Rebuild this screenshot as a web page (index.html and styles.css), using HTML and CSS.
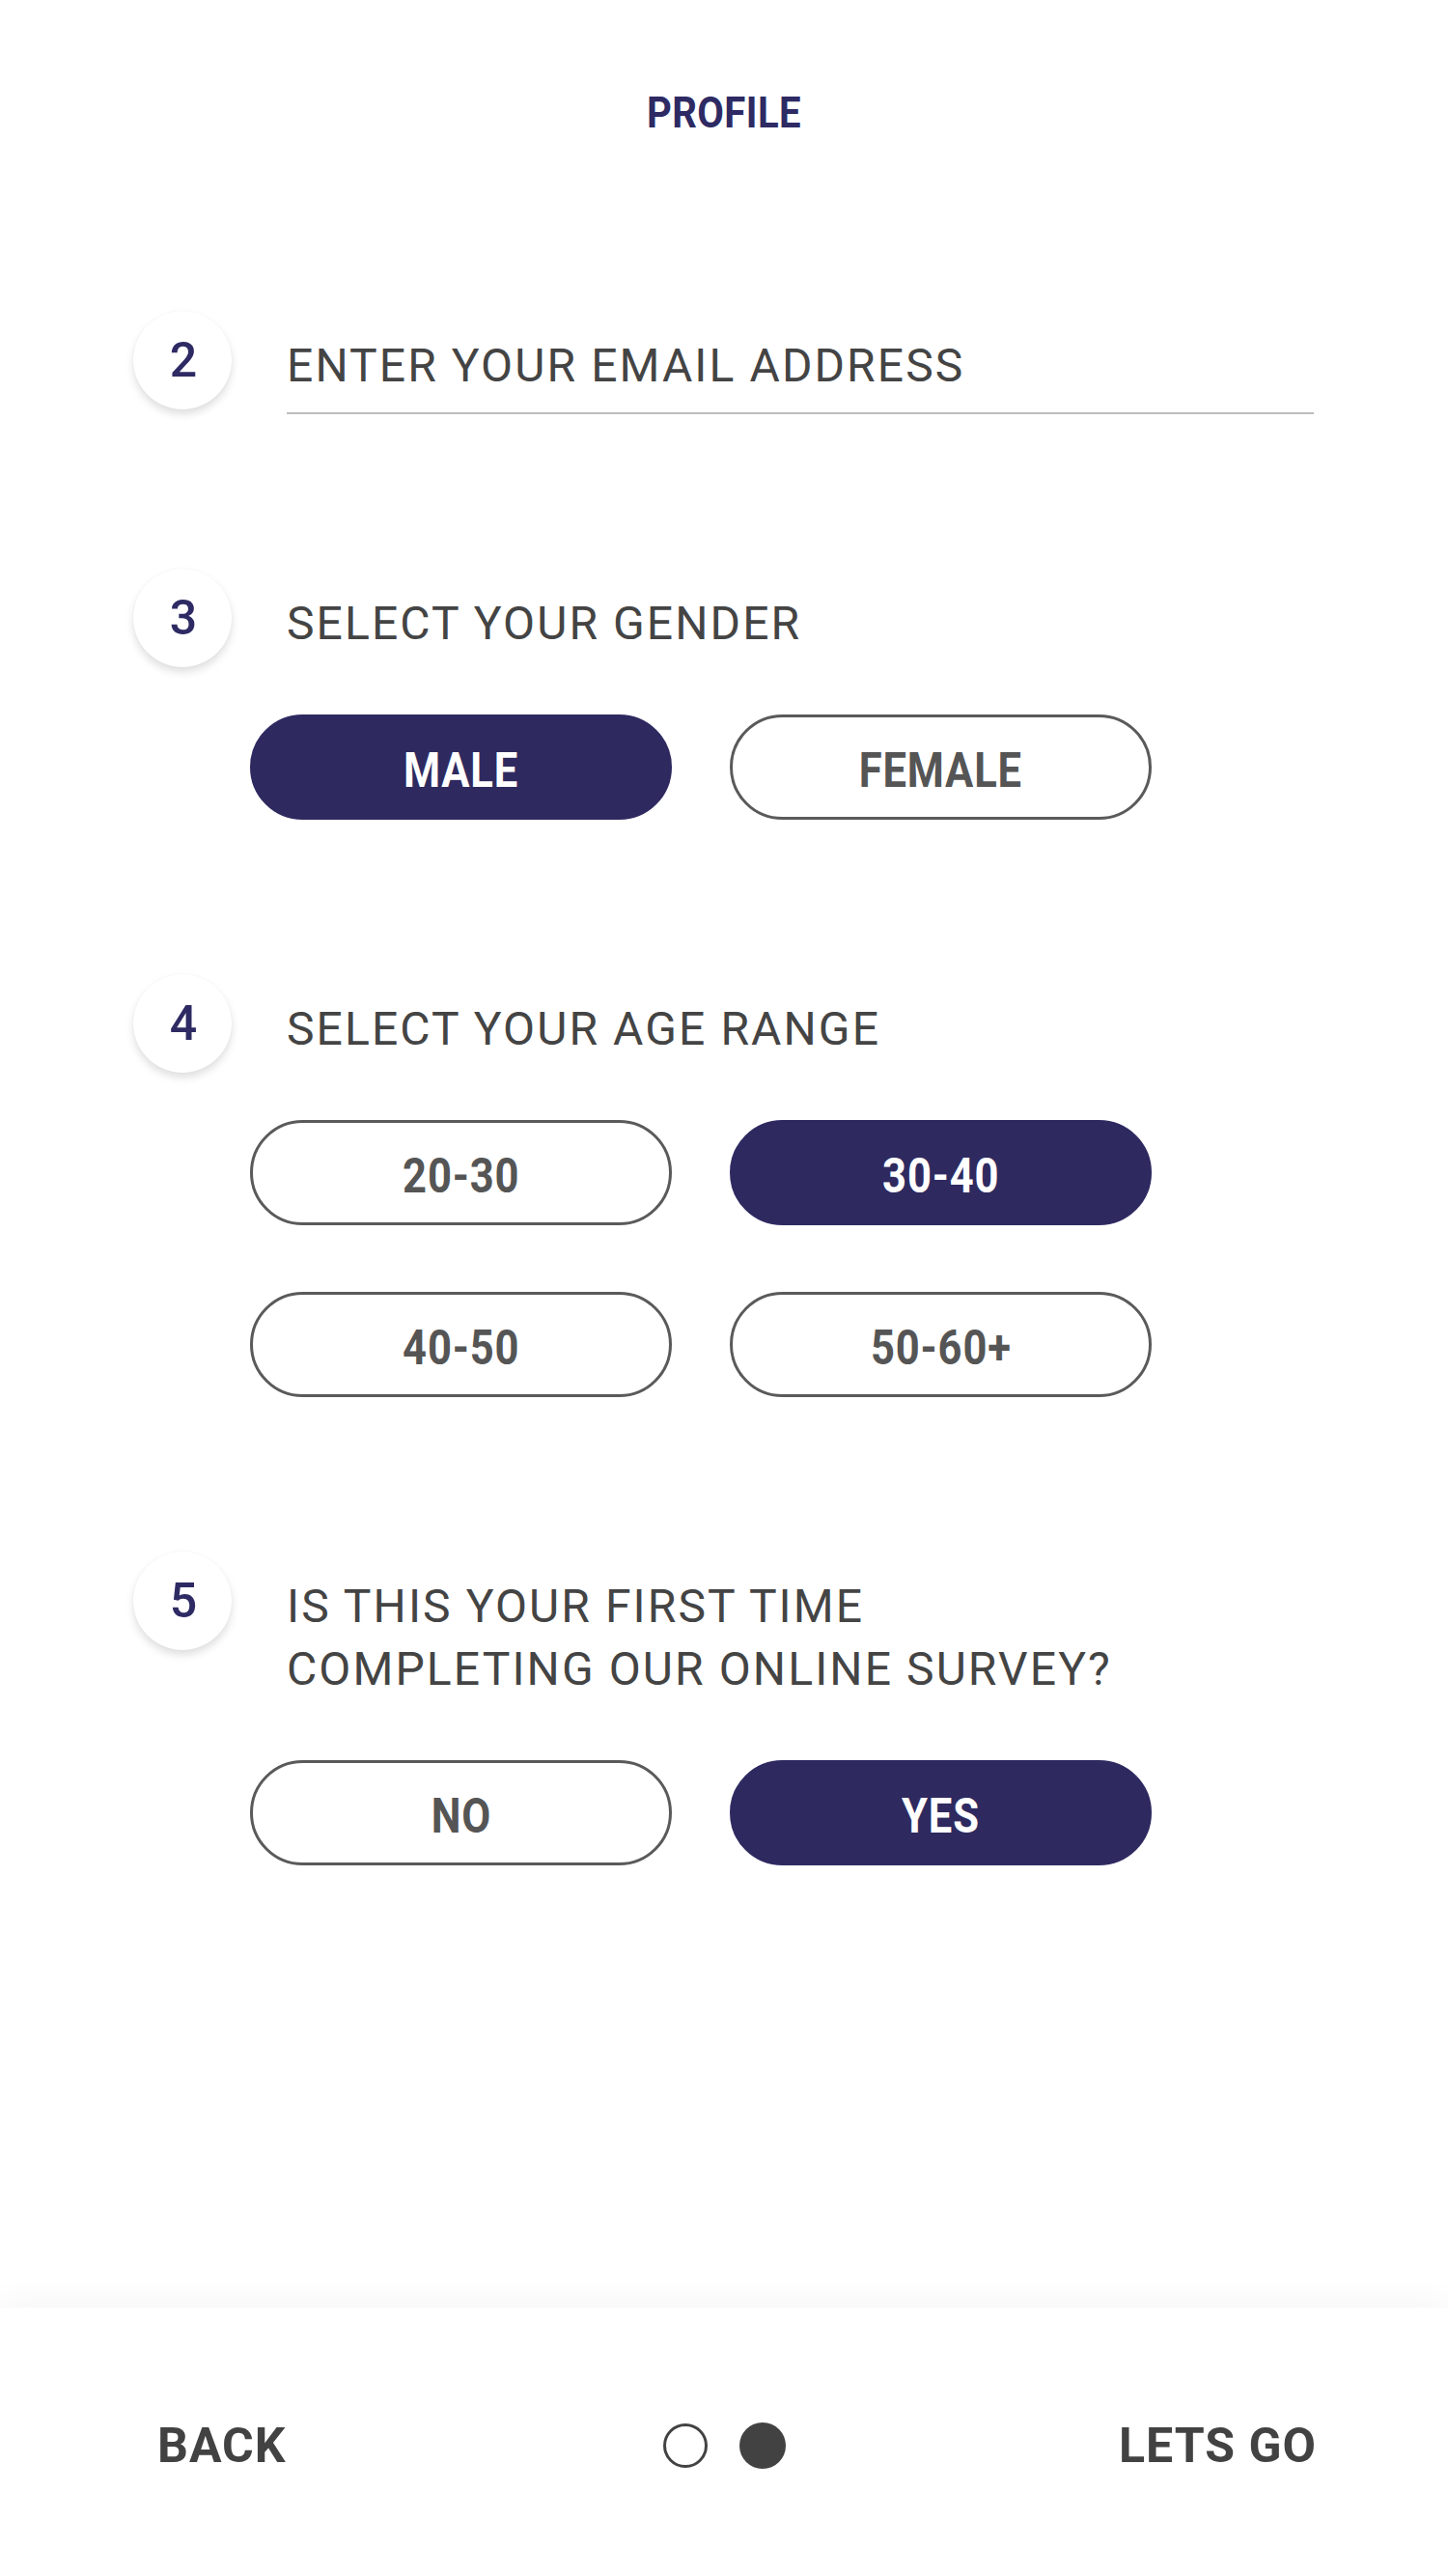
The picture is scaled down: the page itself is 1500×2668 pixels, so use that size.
FILE: index.html
```html
<!DOCTYPE html>
<html lang="en">
<head>
<meta charset="utf-8">
<title>Profile</title>
<link rel="stylesheet" href="styles.css">
</head>
<body>
<div class="screen">
  <main class="main">
    <header class="header"><h1 class="title"><span class="narrow">PROFILE</span></h1></header>
    <div class="steps">
      <section class="step">
        <div class="step-head">
          <span class="badge">2</span>
          <div class="field">ENTER YOUR EMAIL ADDRESS</div>
        </div>
      </section>
      <section class="step">
        <div class="step-head">
          <span class="badge">3</span>
          <div class="label">SELECT YOUR GENDER</div>
        </div>
        <div class="options">
          <button class="opt opt-on"><span class="narrow">MALE</span></button>
          <button class="opt"><span class="narrow">FEMALE</span></button>
        </div>
      </section>
      <section class="step">
        <div class="step-head">
          <span class="badge">4</span>
          <div class="label">SELECT YOUR AGE RANGE</div>
        </div>
        <div class="options">
          <button class="opt"><span class="narrow">20-30</span></button>
          <button class="opt opt-on"><span class="narrow">30-40</span></button>
          <button class="opt"><span class="narrow">40-50</span></button>
          <button class="opt"><span class="narrow">50-60+</span></button>
        </div>
      </section>
      <section class="step">
        <div class="step-head">
          <span class="badge">5</span>
          <div class="label">IS THIS YOUR FIRST TIME<br>COMPLETING OUR ONLINE SURVEY?</div>
        </div>
        <div class="options">
          <button class="opt"><span class="narrow">NO</span></button>
          <button class="opt opt-on"><span class="narrow">YES</span></button>
        </div>
      </section>
    </div>
  </main>
  <footer class="footer">
    <span class="nav nav-back">BACK</span>
    <div class="dots"><span class="dot"></span><span class="dot dot-on"></span></div>
    <span class="nav nav-next">LETS GO</span>
  </footer>
</div>
</body>
</html>
```
FILE: styles.css
```css
* { box-sizing: border-box; }
html, body { margin: 0; padding: 0; background: #ffffff; }
body { font-family: Roboto, "Noto Sans", sans-serif; width: 1500px; }

.screen {
  display: flex;
  flex-direction: column;
  width: 1500px;
  height: 2668px;
  overflow: hidden;
}
.main { flex: 1; background: #ffffff; }

.narrow { display: inline-block; transform: scaleX(0.87); }

.header { padding-top: 87px; text-align: center; }
.title {
  margin: 0;
  font-size: 44px;
  line-height: 60px;
  font-weight: 700;
  color: #2e2a63;
  letter-spacing: 0.5px;
}
.title .narrow { transform: scaleX(0.91); }

.steps {
  margin-top: 175px;
  padding-left: 138px;
  display: flex;
  flex-direction: column;
  gap: 160px;
}

.step-head { display: flex; align-items: flex-start; gap: 57px; }

.badge {
  flex: none;
  width: 102px;
  height: 102px;
  margin-bottom: -14px;
  border-radius: 50%;
  background: #ffffff;
  box-shadow: 0 5px 9px rgba(0, 0, 0, 0.13), 0 0 2px rgba(0, 0, 0, 0.04);
  display: flex;
  align-items: center;
  justify-content: center;
  padding-left: 2px;
  font-size: 50px;
  font-weight: 500;
  color: #2e2a63;
  line-height: 1;
}

.label, .field {
  margin-top: 24px;
  font-size: 48px;
  line-height: 65px;
  color: #444444;
  letter-spacing: 2.1px;
}
.field {
  width: 1064px;
  padding-bottom: 16px;
  border-bottom: 2px solid #bdbdbd;
}

.options {
  margin-top: 62px;
  margin-left: 121px;
  display: grid;
  grid-template-columns: 437px 437px;
  column-gap: 60px;
  row-gap: 69px;
}

.opt {
  height: 109px;
  border: 3px solid #5a5a5a;
  border-radius: 55px;
  background: #ffffff;
  color: #555555;
  font-family: Roboto, "Noto Sans", sans-serif;
  font-size: 50px;
  font-weight: 700;
  letter-spacing: 1px;
  padding: 7px 0 0;
  line-height: 96px;
  text-align: center;
}
.opt-on {
  background: #2e2a60;
  border-color: #2e2a60;
  color: #ffffff;
}

.footer {
  flex: none;
  height: 278px;
  padding-top: 8px;
  background: #ffffff;
  box-shadow: 0 -6px 30px rgba(0, 0, 0, 0.045);
  display: grid;
  grid-template-columns: 1fr auto 1fr;
  align-items: center;
  position: relative;
}
.nav {
  font-size: 50px;
  font-weight: 700;
  color: #424242;
  letter-spacing: 1px;
  line-height: 60px;
}
.nav-back { justify-self: start; margin-left: 163px; }
.nav-next { justify-self: end; margin-right: 136px; }

.dots { display: flex; align-items: center; gap: 33px; }
.dot {
  width: 46px;
  height: 46px;
  border-radius: 50%;
  border: 3px solid #424242;
}
.dot-on { width: 48px; height: 48px; background: #424242; border: none; }
```
